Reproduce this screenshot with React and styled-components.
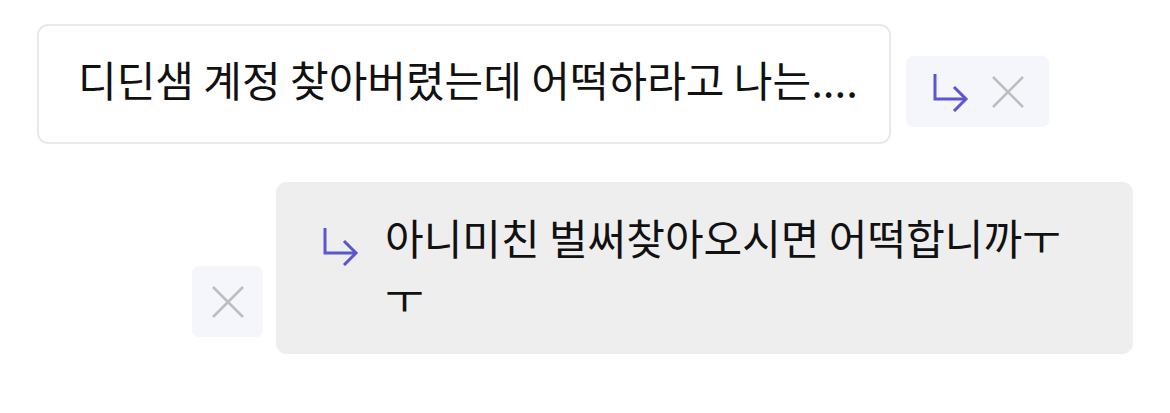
import styled, { createGlobalStyle } from 'styled-components';

const GlobalStyle = createGlobalStyle`
  * { box-sizing: border-box; }
  body {
    margin: 0;
    background: #ffffff;
    font-family: "Noto Sans CJK KR", "Noto Sans", sans-serif;
    color: #111111;
  }
`;

const thread = {
  question: '디딘샘 계정 찾아버렸는데 어떡하라고 나는....',
  answer: '아니미친 벌써찾아오시면 어떡합니까ㅜㅜ',
};

function ReplyArrow() {
  return (
    <svg width="38" height="40" viewBox="0 0 38 40" fill="none">
      <path d="M4 2 V27 H35" stroke="#5a56d2" strokeWidth="3" />
      <path d="M23 15 L35 27 L23 39" stroke="#5a56d2" strokeWidth="3" />
    </svg>
  );
}

function CloseIcon() {
  return (
    <svg width="34" height="34" viewBox="0 0 34 34" fill="none">
      <path d="M2 2 L32 32 M32 2 L2 32" stroke="#bdbdbd" strokeWidth="2.5" />
    </svg>
  );
}

export default function App() {
  return (
    <>
      <GlobalStyle />
      <Page>
        <Row>
          <QuestionCard>
            <Text>{thread.question}</Text>
          </QuestionCard>
          <Actions>
            <IconButton><ReplyArrow /></IconButton>
            <IconButton><CloseIcon /></IconButton>
          </Actions>
        </Row>
        <Row $right>
          <Actions $single>
            <IconButton><CloseIcon /></IconButton>
          </Actions>
          <AnswerCard>
            <ArrowSlot><ReplyArrow /></ArrowSlot>
            <Text>{thread.answer}</Text>
          </AnswerCard>
        </Row>
      </Page>
    </>
  );
}

const Page = styled.div`
  display: flex;
  flex-direction: column;
  gap: 38px;
  padding: 24px 37px 0;
`;

const Row = styled.div`
  display: flex;
  align-items: flex-end;
  gap: ${p => (p.$right ? '13px' : '15px')};
  justify-content: ${p => (p.$right ? 'flex-end' : 'flex-start')};
`;

const QuestionCard = styled.div`
  width: 854px;
  height: 120px;
  display: flex;
  align-items: center;
  padding: 0 30px 12px 39px;
  background: #ffffff;
  border: 2px solid #e9e9ec;
  border-radius: 11px;
`;

const AnswerCard = styled.div`
  width: 857px;
  height: 172px;
  display: flex;
  align-items: flex-start;
  gap: 26px;
  padding: 25px 46px 0 45px;
  background: #eeeeee;
  border-radius: 11px;
`;

const ArrowSlot = styled.div`
  flex: none;
  padding-top: 19px;
`;

const Text = styled.p`
  margin: 0;
  font-size: 42px;
  line-height: 59px;
  font-weight: 400;
  color: #111111;
  letter-spacing: 0;
  word-break: normal;
  line-break: anywhere;
`;

const Actions = styled.div`
  display: flex;
  align-items: center;
  justify-content: center;
  gap: 22px;
  height: 71px;
  width: ${p => (p.$single ? '71px' : '143px')};
  margin-bottom: 17px;
  background: #f5f5fc;
  border-radius: 7px;
`;

const IconButton = styled.button`
  display: flex;
  align-items: center;
  justify-content: center;
  padding: 0;
  background: none;
  border: none;
  cursor: pointer;
`;
